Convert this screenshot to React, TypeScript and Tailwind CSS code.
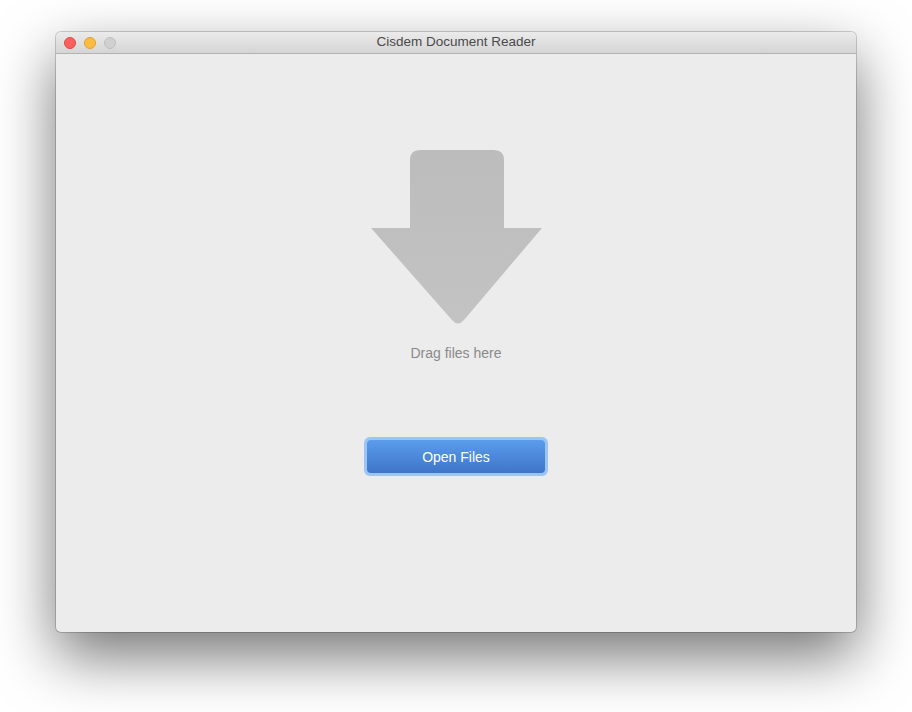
import React from 'react';

function TrafficLights() {
  return (
    <div className="flex items-center gap-[8px] pl-[8px] pt-[1px]">
      <span className="w-[12px] h-[12px] rounded-full bg-[#fc605c] border border-[#de4a43]" />
      <span className="w-[12px] h-[12px] rounded-full bg-[#fdbc40] border border-[#dea131]" />
      <span className="w-[12px] h-[12px] rounded-full bg-[#d0d0d0] border border-[#bdbdbd]" />
    </div>
  );
}

function DropArrow() {
  return (
    <svg width="172" height="178" viewBox="0 0 172 178" className="ml-[2px]">
      <defs>
        <linearGradient id="arrowFill" x1="0" y1="0" x2="0" y2="1">
          <stop offset="0" stopColor="#bcbcbc" />
          <stop offset="1" stopColor="#c3c3c3" />
        </linearGradient>
      </defs>
      <path
        d="M49,0 H123 Q133,0 133,10 V78 H171 L93,170 Q87,177 81,170 L0,78 H39 V10 Q39,0 49,0 Z"
        fill="url(#arrowFill)"
      />
    </svg>
  );
}

export default function App() {
  return (
    <div className="min-h-[712px] bg-white pt-[32px] pl-[56px] font-['Liberation_Sans',Arial,sans-serif]">
      <div className="w-[800px] h-[600px] rounded-[5px] overflow-hidden flex flex-col bg-[#ececec] shadow-[0_24px_60px_rgba(0,0,0,0.55),0_0_0_1px_rgba(0,0,0,0.18)]">
        <div className="relative h-[22px] shrink-0 flex items-center bg-gradient-to-b from-[#ebebeb] to-[#d5d5d5] border-b border-[#b3b3b3]">
          <TrafficLights />
          <div className="absolute inset-0 flex items-center justify-center text-[13.5px] text-[#4a4a4a]">
            Cisdem Document Reader
          </div>
        </div>
        <div className="flex-1 flex flex-col items-center pt-[96px]">
          <DropArrow />
          <div className="mt-[17px] text-[14px] leading-[16px] text-[#8a8a8a]">Drag files here</div>
          <div className="mt-[76px] p-[3px] rounded-[6px] bg-[#9cc4f5]">
            <button className="w-[178px] h-[33px] rounded-[4px] bg-gradient-to-b from-[#5b9cec] to-[#3f75c9] text-white text-[14px] leading-none">
              Open Files
            </button>
          </div>
        </div>
      </div>
    </div>
  );
}
